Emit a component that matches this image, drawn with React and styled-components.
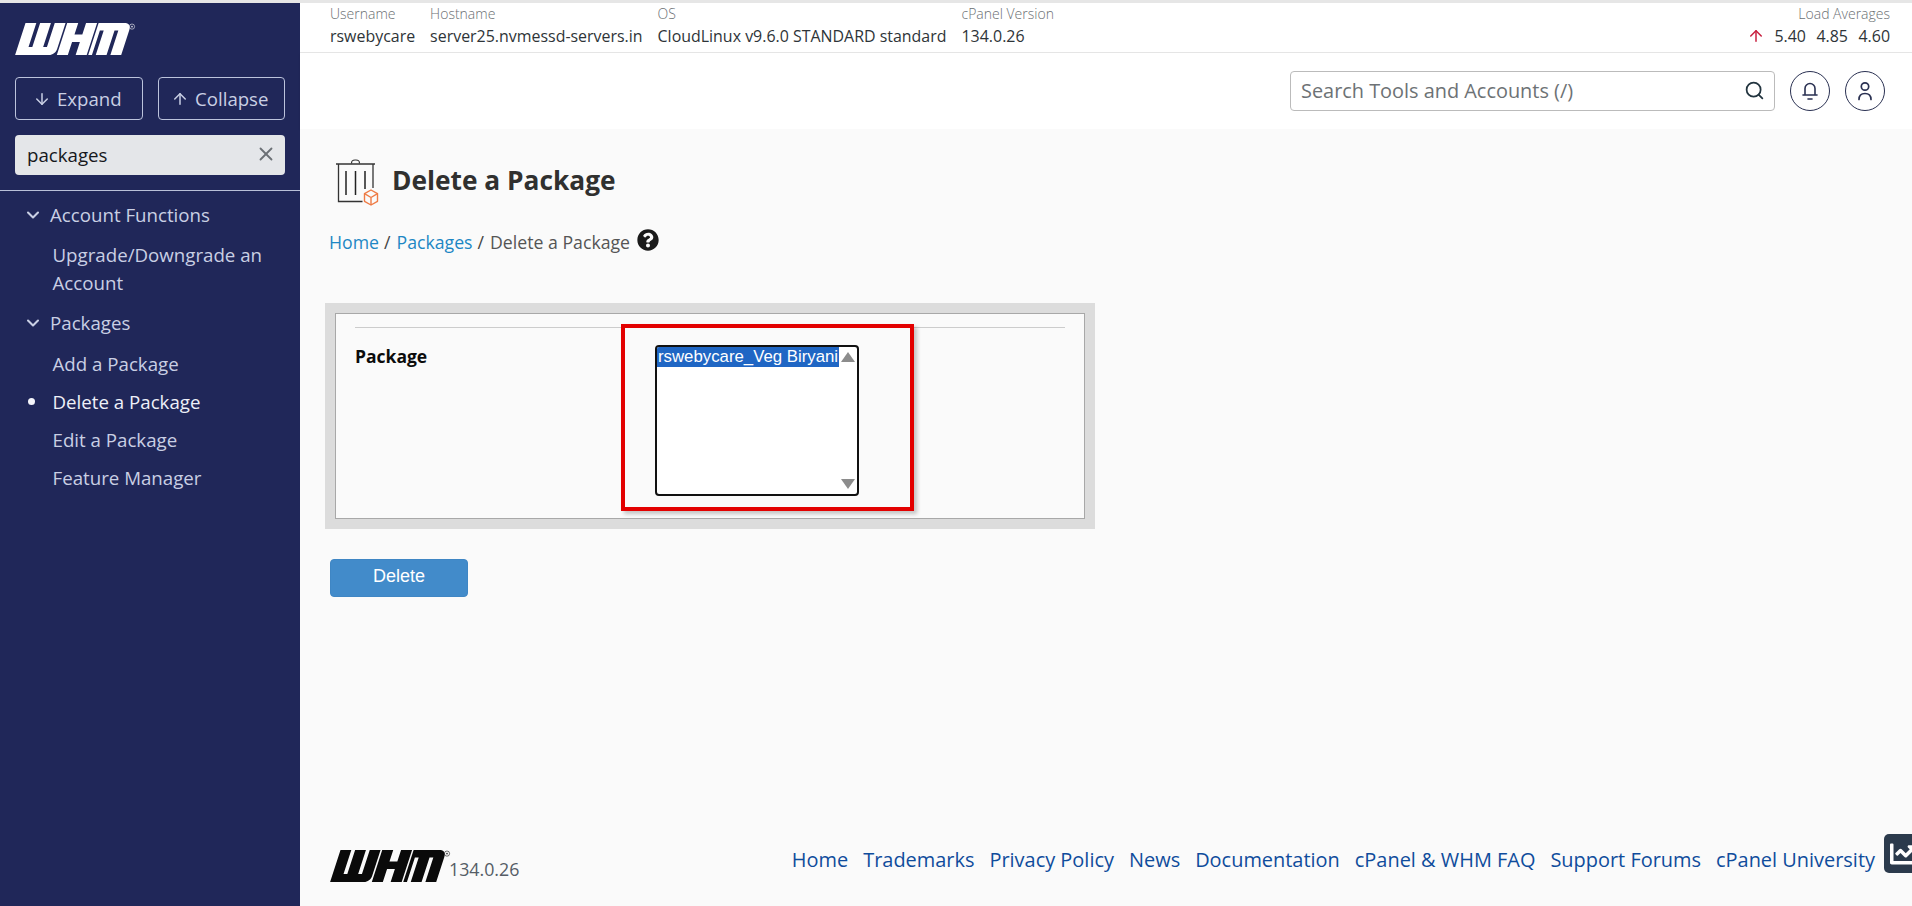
import React from "react";
import styled, { createGlobalStyle } from "styled-components";
import { ArrowDown, ArrowUp, X, ChevronDown, Search } from "lucide-react";
import { FaQuestionCircle, FaChartLine } from "react-icons/fa";

const Global = createGlobalStyle`
  html, body { margin: 0; padding: 0; height: 906px; overflow: hidden; background: #fafafa; }
  body { font-family: "Open Sans", "Liberation Sans", sans-serif; }
  * { box-sizing: border-box; }
`;

const Shell = styled.div`
  display: flex;
  width: 1912px;
  height: 906px;
  border-top: 3px solid #e6e6e6;
  position: relative;
  overflow: hidden;
`;

const Sidebar = styled.aside`
  width: 300px;
  flex: none;
  background: #202759;
  color: #c9cfe4;
  display: flex;
  flex-direction: column;
`;

const LogoWrap = styled.div`
  padding: 20px 0 0 15px;
  height: 74px;
  line-height: 0;
`;

const ButtonRow = styled.div`
  display: flex;
  gap: 15px;
  padding: 0 15px;
`;

const SideButton = styled.button`
  flex: 1;
  height: 43px;
  display: flex;
  align-items: center;
  justify-content: center;
  gap: 6px;
  background: transparent;
  border: 1px solid #bcc3dc;
  border-radius: 4px;
  color: #c9cfe4;
  font: 400 18.6px "Open Sans", sans-serif;
  padding: 0 3px 0 0;
`;

const SideSearch = styled.div`
  margin: 15px 15px 0;
  height: 40px;
  background: #e4e6e9;
  border-radius: 4px;
  display: flex;
  align-items: center;
  justify-content: space-between;
  padding: 0 8px 2px 12px;
  font-size: 18.7px;
  color: #16181c;
`;

const SideRule = styled.hr`
  border: 0;
  border-top: 1px solid #b9c0d8;
  margin: 15px 0 0;
`;

const Menu = styled.nav`
  display: flex;
  flex-direction: column;
  padding-top: 5px;
  font-size: 18.7px;
  line-height: 28px;
`;

const MenuGroup = styled.div`
  display: flex;
  align-items: center;
  gap: 7px;
  padding-left: 23px;
  height: ${p => p.$h}px;
  margin-bottom: ${p => p.$mb || 0}px;
`;

const MenuItem = styled.div`
  position: relative;
  padding: 5px 15px 5px 52.5px;
  color: ${p => (p.$active ? "#eef0f8" : "#c9cfe4")};
  ${p => p.$active && `
    &::before {
      content: "";
      position: absolute;
      left: 28px;
      top: 50%;
      width: 7px;
      height: 7px;
      margin-top: -3.5px;
      border-radius: 50%;
      background: #f4f5fb;
    }
  `}
`;

const Main = styled.main`
  flex: 1;
  min-width: 0;
  display: flex;
  flex-direction: column;
`;

const Stats = styled.header`
  height: 50px;
  background: #fff;
  border-bottom: 1px solid #e6e6e6;
  display: flex;
  justify-content: space-between;
  padding: 0 22px 0 30px;
`;

const StatGroup = styled.div`
  display: flex;
  gap: 15px;
`;

const Stat = styled.div`
  display: flex;
  flex-direction: column;
  align-items: ${p => (p.$right ? "flex-end" : "flex-start")};
`;

const StatLabel = styled.span`
  font-size: 14px;
  line-height: 20px;
  padding-top: 1px;
  color: #6b6f73;
  font-weight: 300;
`;

const StatValue = styled.span`
  display: flex;
  align-items: center;
  font-size: 15.95px;
  line-height: 24px;
  color: #2e3438;
`;

const LoadNums = styled.span`
  display: flex;
  gap: 10.5px;
  margin-left: 9px;
`;

const Toolbar = styled.div`
  height: 76px;
  flex: none;
  background: #fff;
  box-shadow: 0 1px 2px rgba(0,0,0,.1);
  display: flex;
  justify-content: flex-end;
  align-items: flex-start;
  padding: 18px 27px 0 0;
  gap: 15px;
`;

const TopSearch = styled.div`
  width: 485px;
  height: 40px;
  border: 1px solid #bbb;
  border-radius: 4px;
  display: flex;
  align-items: center;
  justify-content: space-between;
  padding: 0 9px 2px 10px;
  font-size: 19.9px;
  color: #6d7275;
`;

const RoundBtn = styled.div`
  width: 40px;
  height: 40px;
  border: 1.3px solid #2a3152;
  border-radius: 50%;
  display: flex;
  align-items: center;
  justify-content: center;
  color: #2a3152;
`;

const Content = styled.div`
  flex: 1;
  padding: 29px 0 0 30px;
  display: flex;
  flex-direction: column;
  background: #fafafa;
`;

const TitleRow = styled.div`
  display: flex;
  align-items: center;
  gap: 11px;
  margin-left: 5px;
  height: 50px;
`;

const Title = styled.h1`
  margin: -6px 0 0;
  font-size: 26.3px;
  font-weight: 700;
  color: #30302f;
  line-height: 40px;
`;

const Crumbs = styled.div`
  display: flex;
  align-items: center;
  margin: 19.5px 0 0 -1px;
  height: 28px;
  font-size: 17.7px;
  color: #555;
`;

const Crumb = styled.a`
  color: #1d87c4;
`;

const Sep = styled.span`
  color: #444;
  margin: 0 6px 0 5px;
`;

const HelpIcon = styled.span`
  display: flex;
  margin-left: 7px;
  margin-top: -3px;
  color: #1a1a1a;
`;

const Panel = styled.section`
  margin: 47px 0 0 -5px;
  width: 770px;
  height: 226px;
  border: 10px solid #dcdcdc;
  background: #fafafa;
`;

const PanelInner = styled.div`
  height: 100%;
  border: 1px solid #a8a8a8;
  padding: 13px 19px 0;
`;

const Rule = styled.hr`
  border: 0;
  border-top: 1px solid #ccc;
  margin: 0;
`;

const FormRow = styled.div`
  display: flex;
  align-items: flex-start;
`;

const FieldLabel = styled.label`
  width: 266px;
  flex: none;
  margin-top: 16px;
  font-size: 17.5px;
  font-weight: 700;
  line-height: 24px;
  color: #0c0c0c;
`;

const Highlight = styled.div`
  width: 293px;
  height: 187px;
  margin-top: -4px;
  border: 4px solid #e30000;
  background: #fafafa;
  box-shadow: 3px 3px 4px rgba(0,0,0,.22);
  padding: 17px 0 0 30px;
`;

const ListBox = styled.div`
  width: 204px;
  height: 151px;
  background: #fff;
  border: 2px solid #111;
  border-radius: 4px;
  display: flex;
  overflow: hidden;
`;

const Options = styled.div`
  flex: 1;
`;

const Option = styled.div`
  height: 20px;
  background: #1f66c4;
  color: #fff;
  font: 400 16.8px/19px "Liberation Sans", Arial, sans-serif;
  padding-left: 1px;
  white-space: nowrap;
`;

const ScrollTrack = styled.div`
  width: 18px;
  flex: none;
  display: flex;
  flex-direction: column;
  justify-content: space-between;
  align-items: center;
  padding: 5px 0 5px;
`;

const Tri = styled.span`
  width: 0;
  height: 0;
  border-left: 7px solid transparent;
  border-right: 7px solid transparent;
  ${p => (p.$down ? "border-top" : "border-bottom")}: 10px solid #8c8c8c;
`;

const DeleteBtn = styled.button`
  margin-top: 30px;
  width: 138px;
  height: 38px;
  background: #428bca;
  border: 1px solid #3f86c4;
  border-radius: 4px;
  color: #fff;
  font: 400 18px "Liberation Sans", Arial, sans-serif;
  padding: 0 0 3px;
`;

const Footer = styled.footer`
  flex: none;
  height: 60px;
  display: flex;
  justify-content: space-between;
  padding: 0 37px 0 30px;
  background: #fafafa;
  margin-top: auto;
`;

const FooterBrand = styled.div`
  display: flex;
  align-items: flex-end;
  height: 36px;
  line-height: 0;
`;

const Version = styled.span`
  font-size: 17.8px;
  line-height: 26px;
  margin-left: -2px;
  color: #555d66;
`;

const FooterLinks = styled.div`
  display: flex;
  gap: 15px;
  height: 28px;
  font-size: 19.95px;
  line-height: 28px;
  color: #0f4c9c;
`;

const ChartBtn = styled.div`
  position: absolute;
  left: 1884px;
  top: 831px;
  width: 40px;
  height: 39px;
  background: #2b3a4c;
  border-radius: 5px;
  color: #fff;
  display: flex;
  align-items: center;
  padding-left: 6px;
`;

function WhmLogo({ color }) {
  return (
    <svg width="121" height="32" viewBox="0 0 121 32" aria-label="WHM logo">
      <g transform="translate(10.5 0) skewX(-18) scale(1.03 1)" fill={color}>
        <path d="M0 0h10.500v24h3.700V0h10.500v24h3.700V0h10.500v26c0 3.600-2.400 6-6 6H0z" />
        <path d="M40.500 0h10.700v11.500h7.600V0h10.700v32H58.800V19h-7.600v13H40.500z" />
        <path d="M71 0h25c4.500 0 7 2.700 7 7v25H92.500V7.500h-3.700V32H78.300V7.500h-3.700V32H71z" />
      </g>
      <circle cx="117" cy="3.600" r="2.600" fill="none" stroke={color} strokeWidth=".7" opacity=".8" />
      <circle cx="117" cy="3.600" r=".9" fill={color} opacity=".8" />
    </svg>
  );
}

function TrashIcon() {
  return (
    <svg width="46" height="48" viewBox="0 0 46 48" fill="none">
      <path d="M1 5h39" stroke="#333" strokeWidth="1.300" />
      <path d="M16.500 4.500c0-3 1-3.500 3.500-3.500h1c2.500 0 3.500.5 3.500 3.500" stroke="#333" strokeWidth="1.200" />
      <path d="M3.500 5v37.500h24" stroke="#333" strokeWidth="1.300" />
      <path d="M38 5v24" stroke="#333" strokeWidth="1.300" />
      <path d="M11 12v24M20.500 12v24M30 12v18" stroke="#222" strokeWidth="1.500" />
      <g stroke="#ee7b45" strokeWidth="1.400" strokeLinejoin="round">
        <path d="M36 31l6.500 3.700v7.600L36 46l-6.500-3.700v-7.600z" />
        <path d="M29.500 34.700L36 38.500l6.500-3.800M36 38.500V46" />
      </g>
    </svg>
  );
}

function BellIcon() {
  return (
    <svg width="18" height="20" viewBox="0 0 18 20" fill="none" stroke="currentColor" strokeWidth="1.600" strokeLinecap="round">
      <path d="M4 13.500V7.500a5 5 0 0 1 10 0v6" />
      <path d="M2 14h14" />
      <path d="M7 18h4" />
    </svg>
  );
}

function UserIcon() {
  return (
    <svg width="18" height="20" viewBox="0 0 18 20" fill="none" stroke="currentColor" strokeWidth="1.700" strokeLinecap="round">
      <circle cx="9" cy="5.500" r="3.700" />
      <path d="M3 18.500c0-4 2-6 6-6s6 2 6 6" />
    </svg>
  );
}

const stats = [
  ["Username", "rswebycare"],
  ["Hostname", "server25.nvmessd-servers.in"],
  ["OS", "CloudLinux v9.6.0 STANDARD standard"],
  ["cPanel Version", "134.0.26"],
];

const links = ["Home", "Trademarks", "Privacy Policy", "News", "Documentation", "cPanel & WHM FAQ", "Support Forums", "cPanel University"];

export default function App() {
  return (
    <>
      <Global />
      <Shell>
        <Sidebar>
          <LogoWrap>
            <WhmLogo color="#fff" />
          </LogoWrap>
          <ButtonRow>
            <SideButton><ArrowDown size={18} />Expand</SideButton>
            <SideButton><ArrowUp size={18} />Collapse</SideButton>
          </ButtonRow>
          <SideSearch>packages<X size={22} color="#6b7075" /></SideSearch>
          <SideRule />
          <Menu>
            <MenuGroup $h={38} $mb={1.5}><ChevronDown size={20} strokeWidth={2.500} />Account Functions</MenuGroup>
            <MenuItem>Upgrade/Downgrade an Account</MenuItem>
            <MenuGroup $h={43}><ChevronDown size={20} strokeWidth={2.500} />Packages</MenuGroup>
            <MenuItem>Add a Package</MenuItem>
            <MenuItem $active>Delete a Package</MenuItem>
            <MenuItem>Edit a Package</MenuItem>
            <MenuItem>Feature Manager</MenuItem>
          </Menu>
        </Sidebar>
        <Main>
          <Stats>
            <StatGroup>
              {stats.map(([l, v]) => (
                <Stat key={l}>
                  <StatLabel>{l}</StatLabel>
                  <StatValue>{v}</StatValue>
                </Stat>
              ))}
            </StatGroup>
            <Stat $right>
              <StatLabel>Load Averages</StatLabel>
              <StatValue>
                <ArrowUp size={18} color="#c8203f" />
                <LoadNums><span>5.40</span><span>4.85</span><span>4.60</span></LoadNums>
              </StatValue>
            </Stat>
          </Stats>
          <Toolbar>
            <TopSearch>Search Tools and Accounts (/)<Search size={21} color="#22343f" /></TopSearch>
            <RoundBtn><BellIcon /></RoundBtn>
            <RoundBtn><UserIcon /></RoundBtn>
          </Toolbar>
          <Content>
            <TitleRow>
              <TrashIcon />
              <Title>Delete a Package</Title>
            </TitleRow>
            <Crumbs>
              <Crumb>Home</Crumb><Sep>/</Sep>
              <Crumb>Packages</Crumb><Sep>/</Sep>
              <span>Delete a Package</span>
              <HelpIcon><FaQuestionCircle size={22} /></HelpIcon>
            </Crumbs>
            <Panel>
              <PanelInner>
                <Rule />
                <FormRow>
                  <FieldLabel>Package</FieldLabel>
                  <Highlight>
                    <ListBox>
                      <Options><Option>rswebycare_Veg Biryani</Option></Options>
                      <ScrollTrack><Tri /><Tri $down /></ScrollTrack>
                    </ListBox>
                  </Highlight>
                </FormRow>
              </PanelInner>
            </Panel>
            <DeleteBtn>Delete</DeleteBtn>
          </Content>
          <Footer>
            <FooterBrand>
              <WhmLogo color="#0a0a0a" />
              <Version>134.0.26</Version>
            </FooterBrand>
            <FooterLinks>
              {links.map(l => <span key={l}>{l}</span>)}
            </FooterLinks>
          </Footer>
        </Main>
        <ChartBtn><FaChartLine size={28} /></ChartBtn>
      </Shell>
    </>
  );
}
